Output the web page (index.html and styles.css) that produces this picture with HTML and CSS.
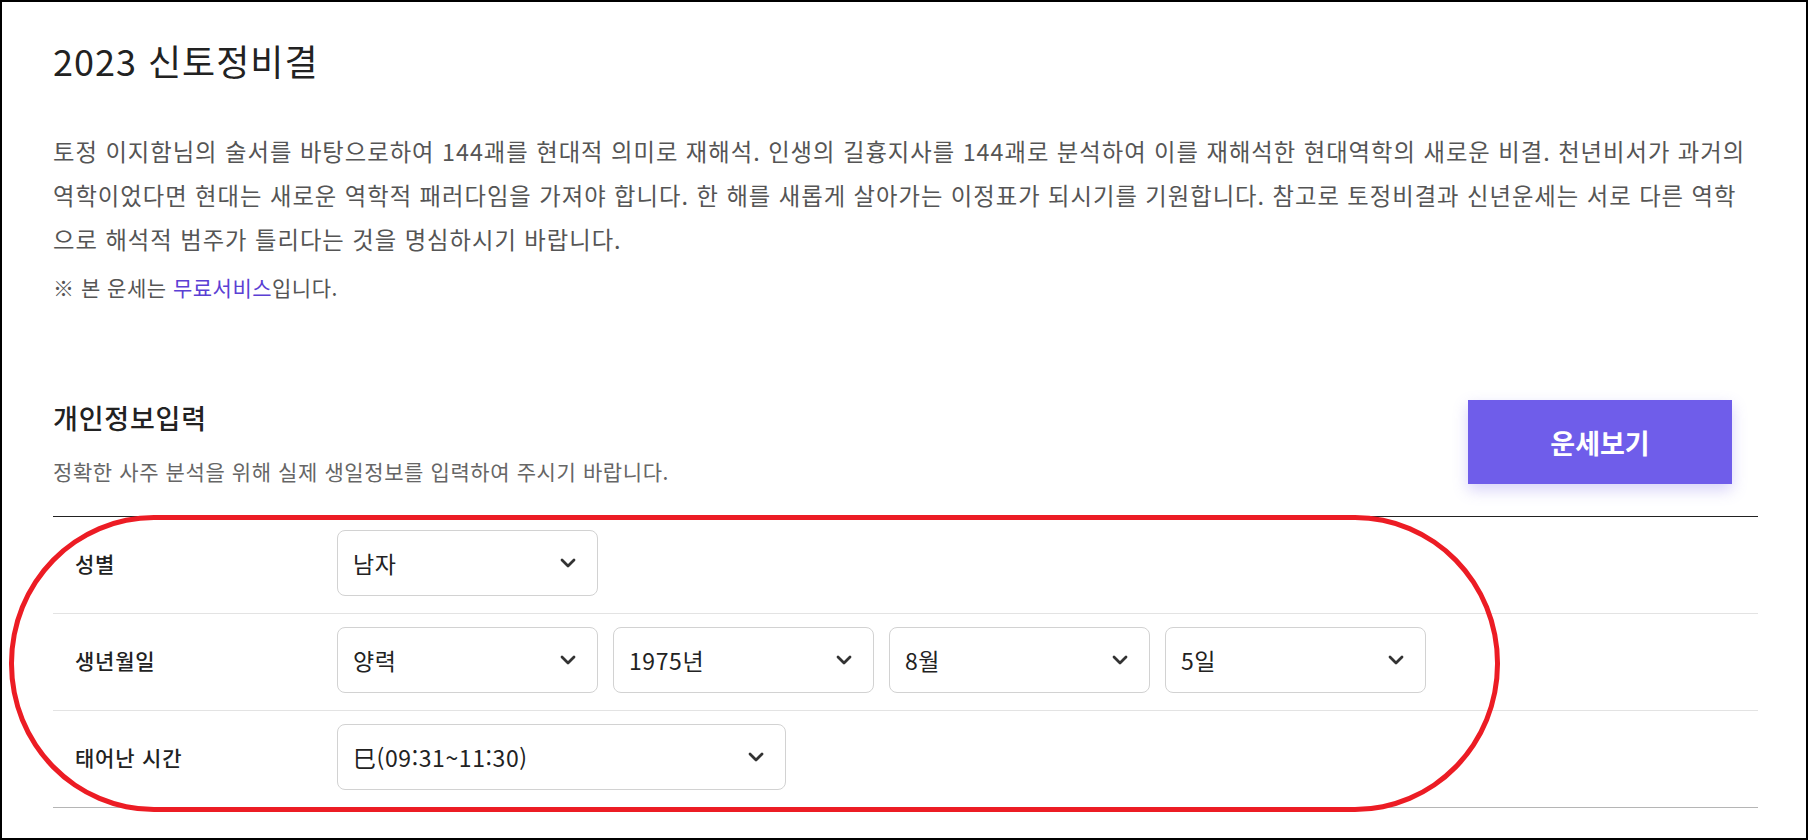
FILE: index.html
```html
<!DOCTYPE html>
<html lang="ko">
<head>
<meta charset="utf-8">
<title>2023 신토정비결</title>
<link rel="stylesheet" href="styles.css">
</head>
<body>
<div class="frame">
  <div class="page">
    <h1 class="title">2023 신토정비결</h1>
    <p class="desc">토정 이지함님의 술서를 바탕으로하여 144괘를 현대적 의미로 재해석. 인생의 길흉지사를 144괘로 분석하여 이를 재해석한 현대역학의 새로운 비결. 천년비서가 과거의 역학이었다면 현대는 새로운 역학적 패러다임을 가져야 합니다. 한 해를 새롭게 살아가는 이정표가 되시기를 기원합니다. 참고로 토정비결과 신년운세는 서로 다른 역학으로 해석적 범주가 틀리다는 것을 명심하시기 바랍니다.</p>
    <p class="note">※ 본 운세는 <span class="link">무료서비스</span>입니다.</p>

    <section class="info">
      <div class="info-head">
        <div class="info-text">
          <h2 class="info-title">개인정보입력</h2>
          <p class="info-sub">정확한 사주 분석을 위해 실제 생일정보를 입력하여 주시기 바랍니다.</p>
        </div>
        <button class="btn">운세보기</button>
      </div>

      <div class="row">
        <div class="label">성별</div>
        <div class="fields">
          <div class="select">남자<svg class="chev" viewBox="0 0 16 10"><path d="M2 2 L8 8 L14 2"/></svg></div>
        </div>
      </div>
      <div class="row">
        <div class="label">생년월일</div>
        <div class="fields">
          <div class="select">양력<svg class="chev" viewBox="0 0 16 10"><path d="M2 2 L8 8 L14 2"/></svg></div>
          <div class="select">1975년<svg class="chev" viewBox="0 0 16 10"><path d="M2 2 L8 8 L14 2"/></svg></div>
          <div class="select">8월<svg class="chev" viewBox="0 0 16 10"><path d="M2 2 L8 8 L14 2"/></svg></div>
          <div class="select">5일<svg class="chev" viewBox="0 0 16 10"><path d="M2 2 L8 8 L14 2"/></svg></div>
        </div>
      </div>
      <div class="row last">
        <div class="label">태어난 시간</div>
        <div class="fields">
          <div class="select wide">巳(09:31~11:30)<svg class="chev" viewBox="0 0 16 10"><path d="M2 2 L8 8 L14 2"/></svg></div>
        </div>
      </div>
    </section>
  </div>
  <div class="annotation"></div>
</div>
</body>
</html>
```

FILE: styles.css
```css
* { box-sizing: border-box; }

html, body {
  margin: 0;
  padding: 0;
  background: #fff;
}

body {
  font-family: "Noto Sans CJK KR", "Noto Sans", sans-serif;
  color: #222;
}

.frame {
  position: relative;
  width: 1808px;
  height: 840px;
  border: 2px solid #000;
  overflow: hidden;
  background: #fff;
}

.page {
  padding: 36px 48px 0 51px;
}

.title {
  margin: 0;
  font-size: 36px;
  line-height: 44px;
  font-weight: 400;
  letter-spacing: 1px;
  color: #222;
}

.desc {
  margin: 47px 0 0;
  font-size: 23.3px;
  line-height: 44px;
  letter-spacing: 1px;
  color: #555;
}

.note {
  margin: 11px 0 0;
  font-size: 21px;
  line-height: 30px;
  letter-spacing: 0.5px;
  color: #555;
}

.link {
  color: #5b3fd4;
}

.info {
  margin-top: 98px;
}

.info-head {
  display: flex;
  justify-content: space-between;
  align-items: flex-start;
  padding-bottom: 30px;
  border-bottom: 1px solid #222;
}

.info-title {
  margin: 0;
  font-size: 27px;
  line-height: 36px;
  font-weight: 500;
  letter-spacing: 0.8px;
  color: #222;
}

.info-sub {
  margin: 20px 0 0;
  font-size: 21px;
  line-height: 30px;
  letter-spacing: 0.6px;
  color: #666;
}

.btn {
  width: 264px;
  height: 84px;
  margin-right: 26px;
  border: none;
  background: #6f5dea;
  color: #fff;
  font-family: inherit;
  font-size: 27px;
  font-weight: 700;
  box-shadow: 0 6px 14px rgba(111, 93, 234, 0.28);
}

.row {
  display: flex;
  align-items: center;
  padding: 13px 0 17px;
  border-bottom: 1px solid #e3e3e3;
}

.row.last {
  border-bottom-color: #b5b5b5;
}

.label {
  width: 284px;
  padding-left: 22px;
  font-size: 21px;
  font-weight: 500;
  letter-spacing: 0.8px;
  color: #222;
}

.fields {
  display: flex;
  gap: 15px;
}

.select {
  width: 261px;
  height: 66px;
  display: flex;
  align-items: center;
  justify-content: space-between;
  padding: 0 21px 0 15px;
  border: 1px solid #d2d2d2;
  border-radius: 8px;
  font-size: 23px;
  letter-spacing: 0.6px;
  color: #222;
  background: #fff;
}

.select.wide {
  width: 449px;
}

.chev {
  width: 16px;
  height: 10px;
  fill: none;
  stroke: #333;
  stroke-width: 2.8;
  stroke-linecap: round;
  stroke-linejoin: round;
}

.annotation {
  position: absolute;
  left: 7px;
  top: 513px;
  width: 1491px;
  height: 297px;
  border: 5px solid #ec1c24;
  border-radius: 145px / 148px;
  pointer-events: none;
}
```
